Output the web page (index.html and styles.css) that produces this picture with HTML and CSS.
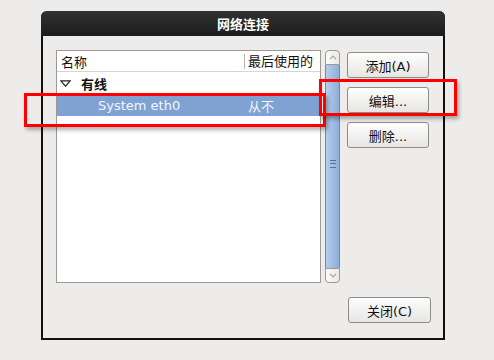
FILE: index.html
```html
<!DOCTYPE html>
<html lang="zh-CN">
<head>
  <meta charset="UTF-8">
  <title>网络连接</title>
  <link rel="stylesheet" href="styles.css">
</head>
<body>

  <!-- DIALOG -->
  <div class="dialog">
    <div class="titlebar">网络连接</div>

    <div class="dialog-body">
      <div class="main-row">

        <!-- daftar koneksi -->
        <div class="tree">
          <div class="tree-header">
            <span class="col-name">名称</span>
            <span class="col-last">最后使用的</span>
          </div>
          <div class="tree-row group">
            <svg class="expander" width="11" height="7" viewBox="0 0 11 7">
              <path d="M0.8 0.8 L10.2 0.8 L5.5 6.2 Z" fill="none" stroke="#222" stroke-width="1.2" stroke-linejoin="miter"/>
            </svg>
            <span>有线</span>
          </div>
          <div class="tree-row selected">
            <span class="col-name conn">System eth0</span>
            <span class="col-last">从不</span>
          </div>
        </div>

        <!-- scrollbar -->
        <div class="scrollbar">
          <div class="scroll-btn up">
            <svg width="8" height="5" viewBox="0 0 8 5"><path d="M1 4.2 L4 1.2 L7 4.2" fill="none" stroke="#a5a3a0" stroke-width="1.2"/></svg>
          </div>
          <div class="scroll-thumb"><span class="grip"></span></div>
          <div class="scroll-btn down">
            <svg width="8" height="5" viewBox="0 0 8 5"><path d="M1 0.8 L4 3.8 L7 0.8" fill="none" stroke="#a5a3a0" stroke-width="1.2"/></svg>
          </div>
        </div>

        <!-- tombol -->
        <div class="actions">
          <button class="btn">添加(A)</button>
          <button class="btn">编辑...</button>
          <button class="btn">删除...</button>
        </div>
      </div>

      <div class="footer">
        <button class="btn btn-close">关闭(C)</button>
      </div>
    </div>
  </div>

  <!-- penanda merah -->
  <div class="mark mark-row"></div>
  <div class="mark mark-edit"></div>

</body>
</html>
```

FILE: styles.css
```css
body {
  margin: 0;
  background-color: #edeceb;
  font-family: "DejaVu Sans", "Noto Sans CJK SC", sans-serif;
  font-size: 13px;
  color: #111;
}

/* DIALOG */
.dialog {
  box-sizing: border-box;
  width: 404px;
  height: 329px;
  margin: 11px 0 0 41px;
  border: 2px solid #111;
  border-top: none;
  border-radius: 6px 6px 0 0;
  background-color: #edeceb;
  display: flex;
  flex-direction: column;
}

.titlebar {
  height: 25px;
  margin: 0 -2px;
  border-radius: 6px 6px 0 0;
  background: linear-gradient(#323232, #1c1c1c);
  color: #fff;
  font-weight: bold;
  font-size: 13px;
  display: flex;
  align-items: center;
  justify-content: center;
}

.dialog-body {
  padding: 14px 12px 0 13px;
}

.main-row {
  display: flex;
  height: 233px;
}

/* TREE */
.tree {
  box-sizing: border-box;
  width: 265px;
  border: 1px solid #9c9a97;
  background-color: #fff;
}

.tree-header {
  height: 21px;
  display: flex;
  align-items: center;
  border-bottom: 1px solid #d6d5d2;
  box-sizing: border-box;
}

.col-name {
  width: 187px;
  padding-left: 4px;
  box-sizing: border-box;
}

.col-last {
  padding-left: 4px;
}

.tree-header .col-last {
  border-left: 1px solid #b5b3b0;
  height: 15px;
  line-height: 15px;
  padding-left: 3px;
}

.tree-row {
  height: 22px;
  display: flex;
  align-items: center;
}

.tree-row.group {
  font-weight: bold;
  padding-left: 3px;
  gap: 10px;
}

.tree-row.selected {
  background-color: #7fa2d3;
  color: #f4f6fb;
}

.conn {
  padding-left: 41px;
}

/* SCROLLBAR */
.scrollbar {
  width: 15px;
  margin-left: 4px;
  display: flex;
  flex-direction: column;
}

.scroll-btn {
  box-sizing: border-box;
  height: 15px;
  border: 1px solid #9c9a97;
  background: linear-gradient(to right, #fbfbfa, #e9e8e6);
  display: flex;
  align-items: center;
  justify-content: center;
}

.scroll-btn.up {
  border-radius: 4px 4px 0 0;
}

.scroll-btn.down {
  border-radius: 0 0 4px 4px;
}

.scroll-thumb {
  flex: 1;
  border: 1px solid #6588bd;
  border-top: none;
  border-bottom: none;
  background: linear-gradient(to right, #b6cdec, #8daedb);
  display: flex;
  align-items: center;
  justify-content: center;
}

.grip {
  width: 6px;
  height: 6px;
  border-top: 1px solid #4f70a3;
  border-bottom: 1px solid #4f70a3;
  position: relative;
  top: -3px;
  background: linear-gradient(transparent 2px, #4f70a3 2px, #4f70a3 3px, transparent 3px);
}

/* BUTTONS */
.actions {
  margin-left: 7px;
  padding-top: 2px;
  display: flex;
  flex-direction: column;
  gap: 9px;
}

.btn {
  width: 82px;
  height: 26px;
  padding: 0;
  border: 1px solid #8e8c89;
  border-radius: 3px;
  background: linear-gradient(#fdfdfd, #e7e6e4);
  font-family: "DejaVu Sans", "Noto Sans CJK SC", sans-serif;
  font-size: 13px;
  color: #111;
}

.footer {
  margin-top: 14px;
  display: flex;
  justify-content: flex-end;
}

.btn-close {
  width: 83px;
}

/* RED MARKS */
.mark {
  position: absolute;
  border: 3px solid #f00;
  box-sizing: border-box;
  box-shadow: 2px 3px 4px rgba(0, 0, 0, 0.3);
}

.mark-row {
  left: 24px;
  top: 93px;
  width: 302px;
  height: 34px;
}

.mark-edit {
  left: 319px;
  top: 79px;
  width: 138px;
  height: 37px;
}
```
